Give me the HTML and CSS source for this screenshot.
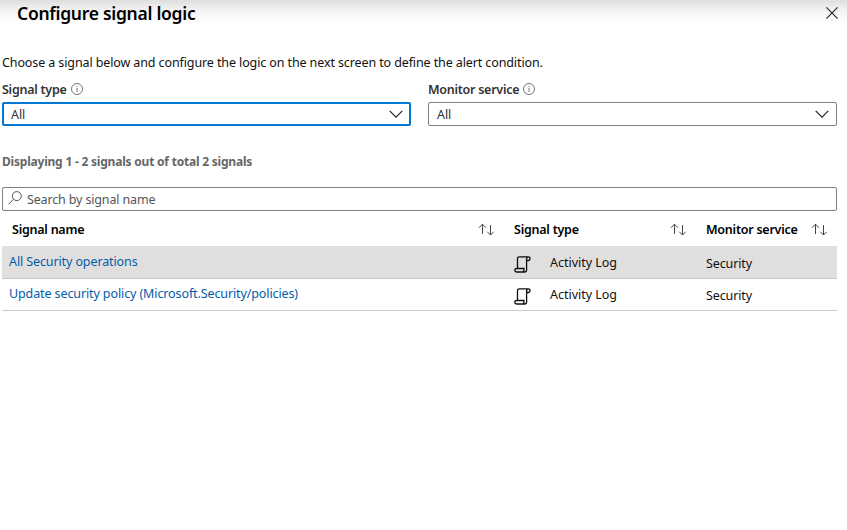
FILE: index.html
```html
<!DOCTYPE html>
<html lang="en">
<head>
<meta charset="utf-8">
<title>Configure signal logic</title>
<link rel="stylesheet" href="styles.css">
</head>
<body>
<svg class="sprite" aria-hidden="true">
  <symbol id="chevron" viewBox="0 0 14 8"><path d="M.7.8 7 7.1 13.3.8" fill="none" stroke="#222" stroke-width="1.2"/></symbol>
  <symbol id="info" viewBox="0 0 12 12"><circle cx="6" cy="6" r="5.5" fill="none" stroke="#666" stroke-width=".9"/><path d="M6 5v4M6 3v1.1" stroke="#666" stroke-width=".9"/></symbol>
  <symbol id="sort" viewBox="0 0 17 13"><path d="M4.5 11V1.2M1 4.7l3.5-3.500L8 4.700M12.500 2v10M9.300 8.800l3.200 3.200 3.200-3.200" fill="none" stroke="#444" stroke-width="1"/></symbol>
  <symbol id="scroll" viewBox="0 0 17 17"><path d="M3.500 11.900V2.800Q3.500.8 5.400.8H14.300M14.200.8C12.700.8 12.600 2 12.600 3V14.200Q12.600 16 10.900 16H2.600M12.700 4.500H14.500Q16 4.400 16 2.700 16 .8 14.300.8M10.400 12.500H2.600Q.8 12.500.8 14.200T2.600 16H10.800Q9.700 15.700 9.700 14.300 9.700 12.700 10.600 12.500" fill="none" stroke="#111" stroke-width="1.300"/></symbol>
</svg>
<main class="blade">
  <header class="head">
    <h1>Configure signal logic</h1>
    <svg class="close" viewBox="0 0 12 12"><path d="M.4.4l11.200 11.200M11.600.4.4 11.600" stroke="#222" stroke-width="1.100"/></svg>
  </header>
  <p class="intro">Choose a signal below and configure the logic on the next screen to define the alert condition.</p>
  <div class="filters">
    <div class="field">
      <div class="label"><span>Signal type</span><svg class="info"><use href="#info"/></svg></div>
      <div class="select focused"><span>All</span><svg class="chevron"><use href="#chevron"/></svg></div>
    </div>
    <div class="field">
      <div class="label"><span>Monitor service</span><svg class="info"><use href="#info"/></svg></div>
      <div class="select"><span>All</span><svg class="chevron"><use href="#chevron"/></svg></div>
    </div>
  </div>
  <p class="count">Displaying 1 - 2 signals out of total 2 signals</p>
  <div class="search">
    <svg class="glass" viewBox="0 0 14 14"><circle cx="8.800" cy="5.100" r="4.500" fill="none" stroke="#555" stroke-width="1"/><path d="M5.500 8.300.5 13.300" stroke="#555" stroke-width="1"/></svg>
    <span>Search by signal name</span>
  </div>
  <div class="table">
    <div class="row thead">
      <div class="cell"><span>Signal name</span><svg class="sort"><use href="#sort"/></svg></div>
      <div class="cell"><span>Signal type</span><svg class="sort"><use href="#sort"/></svg></div>
      <div class="cell"><span>Monitor service</span><svg class="sort"><use href="#sort"/></svg></div>
    </div>
    <div class="row selected">
      <div class="name">All Security operations</div>
      <div class="type"><svg class="scroll"><use href="#scroll"/></svg><span>Activity Log</span></div>
      <div class="service">Security</div>
    </div>
    <div class="row">
      <div class="name">Update security policy (Microsoft.Security/policies)</div>
      <div class="type"><svg class="scroll"><use href="#scroll"/></svg><span>Activity Log</span></div>
      <div class="service">Security</div>
    </div>
  </div>
</main>
</body>
</html>
```
FILE: styles.css
```css
* { box-sizing: border-box; }
body { margin: 0; background: #fff; color: #111; font: 12.5px/20px "Noto Sans", "Open Sans", sans-serif; letter-spacing: -.11px; white-space: nowrap; }
svg { display: block; flex: none; }
.sprite { position: absolute; width: 0; height: 0; }
h1, p { margin: 0; }
.blade { height: 530px; padding-right: 10px; background: linear-gradient(#dedede, #f3f3f3 10px, #fff 24px); }
.head { display: flex; justify-content: space-between; height: 53px; padding: 1px 0 0 17px; margin-right: -1px; }
h1 { font-size: 17.5px; line-height: 24px; font-weight: 600; letter-spacing: -.28px; color: #000; }
.close { width: 12px; height: 12px; margin-top: 6px; }
.intro { padding-left: 2px; height: 27px; }
.filters { display: grid; grid-template-columns: 409px 409px; gap: 17px; padding-left: 2px; }
.label { display: flex; height: 22px; font-weight: 600; letter-spacing: -.26px; color: #333; }
.info { width: 12px; height: 12px; margin: 3px 0 0 4px; }
.select { display: flex; align-items: center; justify-content: space-between; height: 24px; padding: 0 7px 0 8px; border: 1px solid #808080; border-radius: 2px; color: #333; }
.select span, .search span { padding-top: 2px; }
.select.focused { border: 2px solid #0078d4; padding: 0 6px 0 7px; }
.chevron { width: 14px; height: 8px; }
.count { margin: 27px 0 16px 2px; font-weight: 700; font-size: 12px; line-height: 18px; letter-spacing: -.21px; color: #666; }
.search { display: flex; align-items: center; height: 24px; margin-left: 2px; padding-left: 5px; border: 1px solid #808080; border-radius: 2px; letter-spacing: -.15px; color: #555; }
.glass { width: 14px; height: 14px; margin: -2px 5px 0 0; }
.table { margin-left: 2px; }
.row { display: grid; grid-template-columns: 512px 192px 131px; height: 32px; border-bottom: 1px solid #c8c8c8; }
.thead { height: 35px; border: 0; font-weight: 600; letter-spacing: -.24px; color: #000; }
.cell { display: flex; justify-content: space-between; padding: 9px 19px 0 0; }
.cell:first-child { padding-left: 10px; }
.cell:last-child { padding-right: 9px; }
.sort { width: 17px; height: 13px; margin-top: 3px; }
.selected { height: 33px; padding-top: 1px; background: #e1dfdd; }
.name { padding: 5px 0 0 7px; color: #015cab; }
.type { display: flex; padding-top: 6px; letter-spacing: -.02px; }
.scroll { width: 17px; height: 17px; margin: 3px 19px 0 0; }
.service { padding-top: 7px; }
```
